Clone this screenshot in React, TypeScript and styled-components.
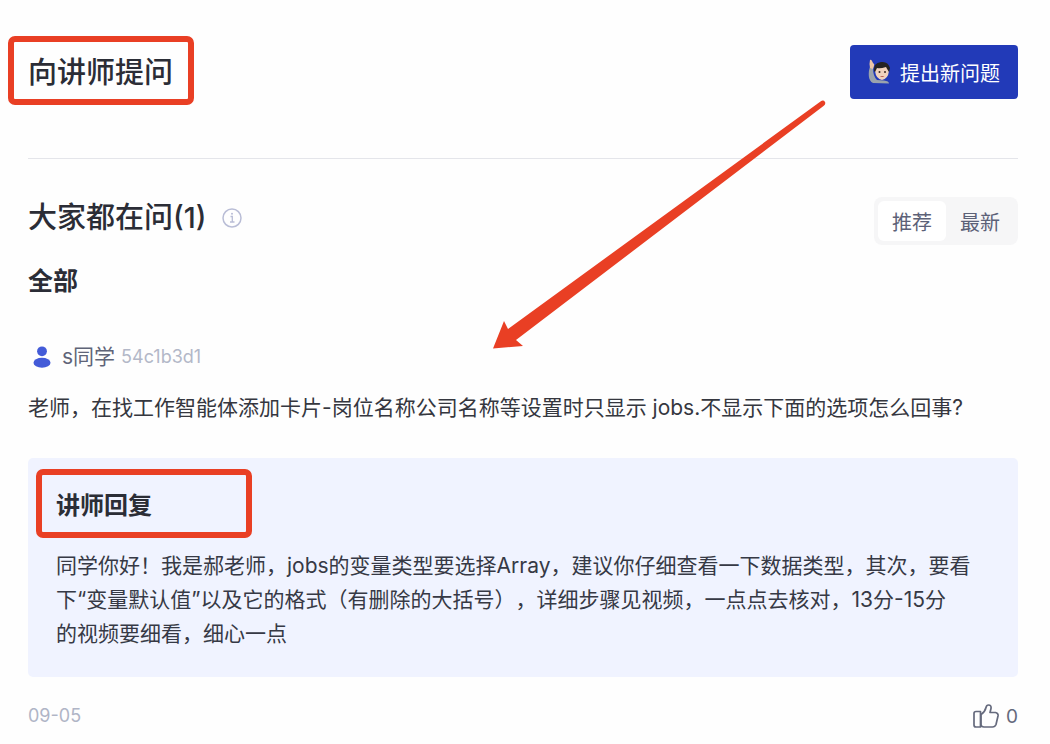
import React from "react";
import styled, { createGlobalStyle } from "styled-components";

const GlobalStyle = createGlobalStyle`
  *, *::before, *::after { box-sizing: border-box; }
  body {
    margin: 0;
    background: #fefefe;
    color: #2b2d36;
    font-family: Inter, "Noto Sans CJK SC", sans-serif;
    text-spacing-trim: space-all;
  }
  h1, h2, h3, p { margin: 0; }
  button { border: 0; font-family: inherit; cursor: pointer; }
`;

const Page = styled.main`
  position: relative;
  padding: 36px 32px 8px 28px;
`;

const Header = styled.header`
  display: flex;
  justify-content: space-between;
  align-items: flex-start;
  height: 123px;
  border-bottom: 1px solid #e4e5ea;
`;

const Marked = styled.div<{ $wide?: boolean }>`
  width: ${(p) => (p.$wide ? "216px" : "186px")};
  height: 69px;
  margin-left: -20px;
  padding: 4px 0 0 14px;
  display: flex;
  align-items: center;
  border: 6px solid #e93f24;
  border-radius: 7px;
`;

const Title = styled.h1`
  font-size: 29px;
  line-height: 40px;
  font-weight: 500;
`;

const AskButton = styled.button`
  display: flex;
  align-items: center;
  gap: 8px;
  height: 54px;
  margin-top: 9px;
  padding: 0 18px;
  border-radius: 4px;
  background: #223ab8;
  color: #fff;
  font-size: 20px;
`;

const ListHeader = styled.div`
  display: flex;
  justify-content: space-between;
  align-items: flex-start;
  margin-top: 38px;
`;

const Heading = styled.h2`
  display: flex;
  align-items: center;
  gap: 16px;
  font-size: 29px;
  line-height: 42px;
  font-weight: 500;
`;

const Tabs = styled.div`
  display: flex;
  height: 48px;
  padding: 4px;
  border-radius: 8px;
  background: #f6f6f7;
`;

const Tab = styled.button<{ $active?: boolean }>`
  width: 68px;
  border-radius: 6px;
  padding: 0;
  background: ${(p) => (p.$active ? "#fff" : "transparent")};
  color: #5c6177;
  font-size: 20px;
`;

const Section = styled.h3`
  margin-top: 18px;
  font-size: 25px;
  line-height: 36px;
  font-weight: 600;
`;

const Author = styled.div`
  display: flex;
  align-items: center;
  margin-top: 42px;
  line-height: 32px;
  padding-left: 5px;
`;

const AuthorName = styled.span`
  margin: 0 6px 0 11px;
  font-size: 21px;
  color: #5f6478;
`;

const AuthorId = styled.span`
  font-size: 18px;
  color: #b3b8c8;
`;

const Question = styled.p`
  margin-top: 18px;
  font-size: 21px;
  line-height: 34px;
  color: #35373f;
`;

const Reply = styled.section`
  margin-top: 33px;
  padding: 11px 32px 26px 28px;
  border-radius: 5px;
  background: #f0f3ff;
`;

const ReplyTitle = styled.h3`
  font-size: 24px;
  line-height: 36px;
  font-weight: 600;
`;

const ReplyText = styled.p`
  margin-top: 11px;
  font-size: 21px;
  line-height: 34px;
  color: #363945;
`;

const Unbroken = styled.span`
  white-space: nowrap;
`;

const Footer = styled.footer`
  display: flex;
  justify-content: space-between;
  align-items: center;
  margin-top: 22px;
  line-height: 34px;
  font-size: 18px;
  color: #b0b5c6;
`;

const Like = styled.button`
  display: flex;
  align-items: center;
  gap: 7px;
  padding: 0;
  background: none;
  color: #656a7d;
  font-size: 19px;
`;

const Arrow = styled.svg`
  position: absolute;
  left: 490px;
  top: 98px;
  pointer-events: none;
`;

const HandIcon = () => (
  <svg width="24" height="26" viewBox="0 0 24 26" aria-hidden="true">
    <path d="M2 8C0 13 0 22 5 24L21 24.500Q21 22 16 21.500L9 21Q5 17 5 9Z" fill="#9aa3ad" />
    <path d="M2 9Q1 5 2 1Q3 0 4 2L5 4Q7 5 6 7L5 10Z" fill="#edc6a6" />
    <path d="M7 12Q7 4 14 4.500Q21 4 21 12Q20 20 14 21Q8 20 7 12Z" fill="#f1d3bd" />
    <path d="M6 12Q5 4 13 3Q20 2 22 9L21 13Q19 10 18 8Q12 10 9 9L7 13Z" fill="#252424" />
    <circle cx="11.500" cy="13" r="1" fill="#3b2a25" />
    <circle cx="17" cy="13" r="1" fill="#3b2a25" />
    <path d="M12 17Q14 19 16.500 17Z" fill="#b65b4f" />
  </svg>
);

const InfoIcon = () => (
  <svg width="20" height="20" viewBox="0 0 20 20" fill="none" stroke="#b9bdd6" aria-hidden="true">
    <circle cx="10" cy="10" r="9" strokeWidth="1.500" />
    <path d="M8.500 8.500H10.300V14M8 14H12.500" strokeWidth="1.300" />
    <circle cx="10" cy="5.800" r="1" fill="#b9bdd6" stroke="none" />
  </svg>
);

const UserIcon = () => (
  <svg width="18" height="22" viewBox="0 0 18 22" fill="#435bd8" aria-hidden="true">
    <circle cx="9" cy="5.300" r="4.900" />
    <ellipse cx="9" cy="16.700" rx="8.500" ry="5" />
  </svg>
);

const ThumbIcon = () => (
  <svg width="26" height="25" viewBox="0 0 26 25" fill="none" stroke="#656a7d" strokeWidth="1.700" strokeLinejoin="round" aria-hidden="true">
    <path d="M3 7.500H7.500V23H3Q1 23 1 21V9.500Q1 7.500 3 7.500Z" />
    <path d="M8 10.500Q12 8 13 3.500Q13.500 1 15.500 1Q18.500 1 18 4.500L17 8.500H22.500Q25.500 9 25 12L23 20.500Q22 23 19.500 23H11Q8 23 8 20.500Z" />
  </svg>
);

export default function App() {
  return (
    <>
      <GlobalStyle />
      <Page>
        <Header>
          <Marked>
            <Title>向讲师提问</Title>
          </Marked>
          <AskButton type="button">
            <HandIcon />
            提出新问题
          </AskButton>
        </Header>

        <ListHeader>
          <Heading>
            大家都在问(1)
            <InfoIcon />
          </Heading>
          <Tabs>
            <Tab type="button" $active>推荐</Tab>
            <Tab type="button">最新</Tab>
          </Tabs>
        </ListHeader>

        <Section>全部</Section>

        <article>
          <Author>
            <UserIcon />
            <AuthorName>s同学</AuthorName>
            <AuthorId>54c1b3d1</AuthorId>
          </Author>
          <Question>
            老师，在找工作智能体添加卡片-岗位名称公司名称等设置时只显示 jobs.不显示下面的选项怎么回事?
          </Question>
          <Reply>
            <Marked $wide>
              <ReplyTitle>讲师回复</ReplyTitle>
            </Marked>
            <ReplyText>
              同学你好！我是郝老师，jobs的变量类型要选择Array，建议你仔细查看一下数据类型，其次，要看<Unbroken>下“变量</Unbroken>默认值”以及它的格式（有删除的大括号），详细步骤见视频，一点点去核对，13分-15分<Unbroken>的视频</Unbroken>要细看，细心一点
            </ReplyText>
          </Reply>
          <Footer>
            <time>09-05</time>
            <Like type="button" aria-label="点赞">
              <ThumbIcon />0
            </Like>
          </Footer>
        </article>

        <Arrow width="340" height="256" viewBox="490 98 340 256" aria-hidden="true">
          <path
            d="M493 348.500L504 321L508 329L820.500 101.500Q823.500 99.500 825 102Q826 104 823.500 106L516 340L523 346Z"
            fill="#e93f24"
          />
        </Arrow>
      </Page>
    </>
  );
}
